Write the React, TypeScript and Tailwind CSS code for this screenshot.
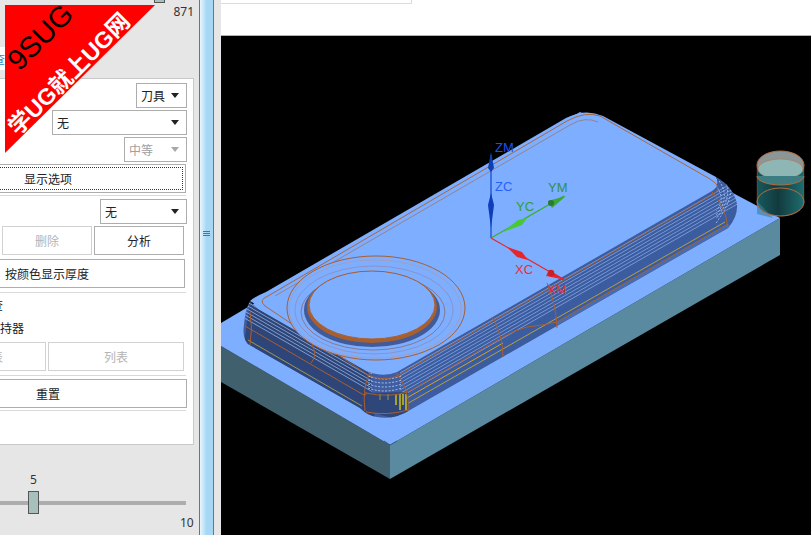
import React from "react";

const font = { fontFamily: '"Noto Sans CJK SC", "Noto Sans", sans-serif' };

function Caret({ disabled = false }: { disabled?: boolean }) {
  return (
    <svg width="8" height="5" viewBox="0 0 8 5" className="ml-auto shrink-0">
      <path d="M0 0H8L4 5Z" fill={disabled ? "#a8a8a8" : "#222"} />
    </svg>
  );
}

function Select({ w, label, disabled = false }: { w: string; label: string; disabled?: boolean }) {
  return (
    <div
      className={`${w} h-[25px] self-end bg-white border border-[#adadad] flex items-center pl-[4px] pr-[7px] text-[12px] ${
        disabled ? "text-[#a0a0a0]" : "text-[#222]"
      }`}
    >
      {label}
      <Caret disabled={disabled} />
    </div>
  );
}

function Btn({ label, cls, disabled = false }: { label: string; cls: string; disabled?: boolean }) {
  return (
    <div
      className={`${cls} h-[29px] bg-white border flex items-center text-[12px] shrink-0 ${
        disabled ? "border-[#d2d2d2] text-[#b4b4b4]" : "border-[#adadad] text-[#222]"
      }`}
    >
      {label}
    </div>
  );
}

const Sep = ({ cls }: { cls: string }) => <div className={`h-px bg-[#d9d9d9] w-[186px] shrink-0 ${cls}`} />;

function Model() {
  const wall =
    "M250 301 Q254 307 263 312 L366 371 Q383 378 397 372 L712 191 Q721 185 716 177 Q733 186 737 204 Q738 217 728 228 L410 410 Q395 420 377 417 Q368 416 360 408 L248 344 Q242 338 244 325 Q245 310 250 301 Z";
  const rightOff = [2, 5, 8.5, 12, 15.5, 19, 22.5, 26];
  const leftOff = [2, 5.5, 9, 12.5, 16, 19.5];
  return (
    <svg viewBox="221 36 590 499" className="block w-[590px] h-[499px]">
      <defs>
        <clipPath id="wallClip">
          <path d={wall} />
        </clipPath>
        <linearGradient id="cyl" x1="0" x2="1" y1="0" y2="0">
          <stop offset="0" stopColor="#17595d" />
          <stop offset="0.45" stopColor="#123a3e" />
          <stop offset="1" stopColor="#1f6d70" />
        </linearGradient>
      </defs>
      <rect x="221" y="36" width="590" height="499" fill="#000" />

      {/* stock block */}
      <polygon points="221,346 390,445 390,479 221,382" fill="#41606e" />
      <polygon points="390,445 780,218 780,255 390,479" fill="#5a8aa0" />
      <polygon points="221,323 260,300 580,112 780,218 390,445 221,346" fill="#7eaeff" />
      <path d="M384 441 L390 445 L397 441" stroke="#3a5a80" strokeWidth="1" fill="none" />

      {/* body top */}
      <path
        d="M250 301 Q254 297 266 292 L566 118 Q585 108 603 116 L716 177 Q721 185 712 191 L397 372 Q383 378 366 371 Z"
        fill="#7eaeff"
      />

      {/* body walls */}
      <path d={wall} fill="#3f5da0" />
      <g clipPath="url(#wallClip)">
        <polygon points="250,301 370,372 375,420 244,345" fill="#2f4579" />
        <polygon points="557,322 728,224 735,232 557,336" fill="#4a6cb0" />
        {rightOff.map((o) => (
          <line
            key={`r${o}`}
            x1={400}
            y1={371 + o}
            x2={745}
            y2={371 + o - 345 * 0.572}
            stroke="#a0c2fa"
            strokeWidth="0.8"
            opacity="0.75"
          />
        ))}
        {leftOff.map((o) => (
          <line
            key={`l${o}`}
            x1={240}
            y1={296 + o}
            x2={372}
            y2={372 + o}
            stroke="#b4cffb"
            strokeWidth="0.8"
            opacity="0.8"
          />
        ))}
        {/* rounded corners: dotted stripes */}
        {[4, 8, 12, 16].map((o) => (
          <path
            key={`c${o}`}
            d={`M368 ${372 + o} Q384 ${378 + o} 402 ${372 + o}`}
            fill="none"
            stroke="#b4cffb"
            strokeWidth="0.9"
            strokeDasharray="2 1.5"
          />
        ))}
        {[3, 7, 11, 15].map((o) => (
          <path
            key={`e${o}`}
            d={`M${712 + o} ${188 - o} Q${724 + o} ${200 - o / 2} ${716} ${208 + o}`}
            fill="none"
            stroke="#a6c6fb"
            strokeWidth="0.9"
            strokeDasharray="2 1.5"
          />
        ))}
        {/* lower tan / yellow bands */}
        <line x1="410" y1="412" x2="728" y2="230" stroke="#b59a7a" strokeWidth="2.5" />
        <line x1="405" y1="405" x2="725" y2="222" stroke="#c0a838" strokeWidth="0.9" />
        <line x1="405" y1="399" x2="503" y2="343" stroke="#d8a020" strokeWidth="1" />
        <line x1="248" y1="340" x2="362" y2="406" stroke="#a8a050" strokeWidth="0.9" />
        {/* front corner */}
        <polygon points="366,393 408,392 408,412 392,418 370,412" fill="#2f4678" />
        {[396, 400, 403, 406].map((x, i) => (
          <line key={x} x1={x} y1="394" x2={x} y2={405 + (i % 2) * 5} stroke="#d8c818" strokeWidth="1.4" />
        ))}
        {[380, 388].map((x) => (
          <line key={x} x1={x} y1="394" x2={x} y2="400" stroke="#a09840" strokeWidth="1" />
        ))}
      </g>

      {/* orange wire lines */}
      <g fill="none" stroke="#a85f30" strokeWidth="1">
        <path d="M265 306 Q258 300 268 296 L567 121 Q585 111 600 116 L710 179 Q725 188 712 195 L397 376 Q383 382 368 375 Z" opacity="0.9" />
        <path d="M275 296 L570 125 Q585 116 598 122" opacity="0.55" />
        <path d="M245 326 L362 394 Q367 397 366 392" />
        <path d="M250 312 Q253 328 250 345" />
        <path d="M312 345 Q318 355 311 363" />
        <path d="M370 372 Q362 388 365 411" />
        <path d="M396 373 Q410 388 408 411" />
        <path d="M366 393 Q388 398 408 392" />
        <path d="M366 412 Q388 416 408 410" />
        <path d="M408 392 L503 337 Q515 330 527 327 Q545 325 557 322 L728 224" />
        <path d="M547 283 Q556 303 557 328" />
        <path d="M492 317 Q503 335 503 357" />
        <path d="M712 192 Q725 205 728 228" />
      </g>

      {/* circular boss */}
      <ellipse cx="376" cy="308" rx="89" ry="52" fill="#7eaeff" stroke="#a85f30" strokeWidth="1" />
      <ellipse cx="375" cy="309" rx="86" ry="49" fill="none" stroke="#a89ab0" strokeWidth="0.8" />
      <ellipse cx="374" cy="310" rx="79" ry="44" fill="none" stroke="#8f8cb8" strokeWidth="0.8" />
      <ellipse cx="373" cy="312" rx="72" ry="38" fill="#7eaeff" stroke="#8c6a70" strokeWidth="0.8" />
      <ellipse cx="372" cy="310" rx="68" ry="37" fill="#3f5b9a" />
      <ellipse cx="372" cy="307" rx="65" ry="36" fill="#a85f30" />
      <ellipse cx="372" cy="305" rx="63" ry="34" fill="#7eaeff" stroke="#a85f30" strokeWidth="1" />

      {/* tool */}
      <path d="M757 165 V202 A23.5 14 0 0 0 804 202 V165 Z" fill="url(#cyl)" />
      <polygon points="757,201 773,218 757,214" fill="#3a7f9c" opacity="0.6" />
      <ellipse cx="780.5" cy="165" rx="23.5" ry="14" fill="#8c9696" stroke="#b07040" strokeWidth="1" />
      <ellipse cx="780.5" cy="169" rx="22.5" ry="10" fill="#8db6b4" stroke="#b08060" strokeWidth="0.8" />
      <path d="M757 176 A23.5 9 0 0 0 804 176" fill="#3d7c80" stroke="#b07040" strokeWidth="1" />
      <path d="M757 165 V202 A23.5 14 0 0 0 804 202 V165" fill="none" stroke="#b07040" strokeWidth="0.6" opacity="0.5" />
      <ellipse cx="780.5" cy="202" rx="23.5" ry="14" fill="none" stroke="#b07040" strokeWidth="1" />

      {/* WCS axes */}
      <g strokeWidth="1.2">
        <line x1="491" y1="238" x2="491" y2="155" stroke="#0f49c8" />
        <line x1="491" y1="238" x2="564" y2="196" stroke="#37b028" />
        <line x1="491" y1="238" x2="564" y2="280" stroke="#e8262a" />
      </g>
      <polygon points="491,152 488,168 491,172 494,168" fill="#0f3fb8" />
      <polygon points="491,193 494,205 491,228 488,205" fill="#0f3fb8" />
      <polygon points="566,196 548,201 552,208" fill="#38a838" />
      <circle cx="551" cy="203" r="3" fill="#2b7a30" />
      <polygon points="503,232 518,220 527,218 522,225" fill="#48c838" />
      <polygon points="566,280 549,270 546,276" fill="#e8262a" />
      <circle cx="551" cy="273" r="3.2" fill="#c82028" />
      <polygon points="507,247 522,252 528,260 517,257" fill="#e8262a" />
      <g fontFamily='"Liberation Sans", sans-serif' fontSize="13">
        <text x="495" y="152" fill="#1a50f0">ZM</text>
        <text x="495" y="191" fill="#2860ff">ZC</text>
        <text x="516" y="211" fill="#30a038">YC</text>
        <text x="548" y="192" fill="#2f9050">YM</text>
        <text x="515" y="274" fill="#e83038">XC</text>
        <text x="547" y="294" fill="#e83038">XM</text>
      </g>
    </svg>
  );
}

export default function App() {
  return (
    <div className="relative w-[811px] h-[535px] overflow-hidden flex bg-[#e6e6e6]" style={font}>
      {/* left panel */}
      <div className="relative w-[199px] h-full flex flex-col overflow-hidden">
        <div className="h-[47px] relative shrink-0">
          <div className="absolute left-[154px] top-[-1px] w-[11px] h-[4px] bg-[#a8c0bc] border border-[#555]" />
          <span className="absolute right-[5px] top-[4px] text-[12px] leading-[16px] text-[#333]" style={{ fontFamily: '"Noto Sans", sans-serif' }}>
            871
          </span>
        </div>
        <div className="w-[6px] h-[23px] bg-white shrink-0 overflow-hidden text-[12px] leading-[23px] text-[#2a8ac0] -indent-[7px]">
          查
        </div>
        <div className="w-[194px] h-[367px] mt-[8px] bg-white border border-[#c8c8c8] border-l-0 flex flex-col pt-[4px] pr-[6px] shrink-0">
          <Select w="w-[51px]" label="刀具" />
          <Select w="w-[135px] mt-[2px]" label="无" />
          <Select w="w-[63px] mt-[2px]" label="中等" disabled />
          <div className="w-[186px] h-[29px] mt-[2px] border border-[#adadad] border-l-0 py-[2px] pr-[2px] shrink-0">
            <div className="w-full h-full border border-dotted border-[#333] border-l-0 flex items-center pl-[24px] text-[12px] text-[#222]">
              显示选项
            </div>
          </div>
          <Sep cls="mt-[2px]" />
          <Select w="w-[87px] mt-[3px]" label="无" />
          <div className="flex gap-[2px] mt-[2px] pl-[2px]">
            <Btn label="删除" cls="w-[90px] justify-center" disabled />
            <Btn label="分析" cls="w-[90px] justify-center" />
          </div>
          <div className="w-[185px] h-[29px] mt-[4px] border border-[#adadad] border-l-0 flex items-center pl-[5px] text-[12px] text-[#222] shrink-0">
            按颜色显示厚度
          </div>
          <Sep cls="mt-[4px]" />
          <div className="h-[23px] flex items-center text-[12px] text-[#222] -ml-[9px] shrink-0">查</div>
          <div className="h-[23px] flex items-center text-[12px] text-[#222] shrink-0">持器</div>
          <div className="flex gap-[2px] mt-[3px]">
            <Btn label="表" cls="w-[46px] border-l-0 overflow-hidden -indent-[9px]" disabled />
            <Btn label="列表" cls="w-[136px] justify-center" disabled />
          </div>
          <Sep cls="mt-[4px]" />
          <div className="w-[187px] h-[29px] mt-[3px] bg-white border border-[#adadad] border-l-0 flex items-center pl-[36px] text-[12px] text-[#222] shrink-0">
            重置
          </div>
          <Sep cls="mt-[2px]" />
        </div>
        {/* slider */}
        <div className="relative flex-1">
          <span className="absolute left-[30px] top-[27px] text-[12px] leading-[16px] text-[#333]" style={{ fontFamily: '"Noto Sans", sans-serif' }}>
            5
          </span>
          <div className="absolute left-0 top-[56px] w-[186px] h-[4px] bg-[#adadad]" />
          <div className="absolute left-[28px] top-[46px] w-[11px] h-[23px] bg-[#a8c0bc] border border-[#555]" />
          <span className="absolute left-[180px] top-[70px] text-[12px] leading-[16px] text-[#333]" style={{ fontFamily: '"Noto Sans", sans-serif' }}>
            10
          </span>
        </div>
      </div>

      {/* splitter */}
      <div className="relative w-[15px] h-full border-x border-[#4a7ea8] bg-gradient-to-r from-[#eaf5fc] via-[#a6d8f5] to-[#a6d8f5] shrink-0">
        <div className="absolute left-[3px] top-[231px] w-[7px] flex flex-col gap-[1px]">
          <div className="h-px bg-[#2f7fa8]" />
          <div className="h-px bg-[#2f7fa8]" />
          <div className="h-px bg-[#2f7fa8]" />
        </div>
      </div>
      <div className="w-[7px] h-full shrink-0 bg-[#e6e6e6]" />

      {/* graphics window */}
      <div className="flex-1 h-full flex flex-col min-w-0">
        <div className="h-[36px] bg-white border-b border-[#b0b0b0] shrink-0">
          <div className="w-[191px] h-[4px] border-r border-b border-[#dcdcdc]" />
        </div>
        <Model />
      </div>

      {/* watermark */}
      <div className="absolute left-[5px] top-[5px] w-[150px] h-[148px] bg-[#ff0000] [clip-path:polygon(0_0,100%_0,0_100%)]">
        <span
          className="absolute left-[-5px] top-[16px] w-[80px] text-center text-[29px] leading-[32px] text-black -rotate-45"
          style={{ fontFamily: '"Liberation Sans", sans-serif' }}
        >
          9SUG
        </span>
        <span
          className="absolute left-[-26px] top-[54px] w-[180px] text-center whitespace-nowrap text-[23px] leading-[30px] font-bold text-white -rotate-45"
          style={{ fontFamily: '"Liberation Sans", "Noto Sans CJK SC", sans-serif' }}
        >
          学UG就上UG网
        </span>
      </div>
    </div>
  );
}
